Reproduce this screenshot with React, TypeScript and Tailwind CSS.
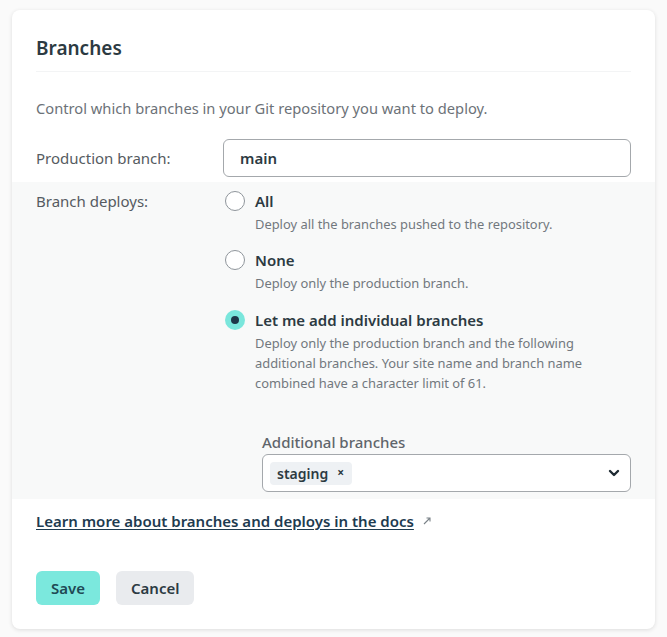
import React from "react";

const Radio = ({
  checked,
  title,
  children,
}: {
  checked?: boolean;
  title: string;
  children: React.ReactNode;
}) => {
  return (
    <div className="flex flex-row">
      <div className="w-[32px] shrink-0 pt-0">
        {checked ? (
          <div className="w-5 h-5 ml-[2px] rounded-full bg-[#7ae6dc] flex items-center justify-center">
            <div className="w-[8px] h-[8px] rounded-full bg-[#1e3648]" />
          </div>
        ) : (
          <div className="w-5 h-5 ml-[2px] rounded-full border border-[#8f959b] bg-white" />
        )}
      </div>
      <div className="flex flex-col">
        <p className="text-[15px] leading-5 font-semibold text-[#2c3a42]">{title}</p>
        <p className="mt-[3px] text-[12.9px] leading-5 text-[#72787e]">{children}</p>
      </div>
    </div>
  );
};

export default function App() {
  return (
    <div
      className="min-h-[637px] w-[667px] bg-[#fafafa] pt-[10px] px-[12px]"
      style={{ fontFamily: '"Noto Sans", "Open Sans", sans-serif' }}
    >
      <div className="w-[643px] bg-white rounded-lg shadow-[0_1px_4px_rgba(0,0,0,0.12)] pb-6">
        <div className="px-6">
          <div className="h-[62px] pt-[26px] border-b border-[#f3f4f5]">
            <h2 className="text-[19px] leading-6 font-semibold text-[#2c3a42]">Branches</h2>
          </div>
        </div>

        <p className="px-6 mt-[26px] text-[14.7px] leading-5 text-[#6c7278]">
          Control which branches in your Git repository you want to deploy.
        </p>

        <div className="px-6 mt-[21px] flex flex-row items-center">
          <label className="w-[187px] text-[15px] leading-5 text-[#555b61]">Production branch:</label>
          <div className="flex-1 h-[38px] rounded-md border border-[#a4a8ac] bg-white flex items-center px-4">
            <span className="text-[15px] font-semibold text-[#2c3a42]">main</span>
          </div>
        </div>

        <div className="mt-[5px] bg-[#f8f9f9] px-6 pt-[9px] pb-[7px] flex flex-row">
          <label className="w-[187px] shrink-0 text-[15px] leading-5 text-[#555b61]">Branch deploys:</label>
          <div className="flex-1 flex flex-col">
            <Radio title="All">Deploy all the branches pushed to the repository.</Radio>
            <div className="h-[16px]" />
            <Radio title="None">Deploy only the production branch.</Radio>
            <div className="h-[17px]" />
            <Radio checked title="Let me add individual branches">
              Deploy only the production branch and the following
              <br />
              additional branches. Your site name and branch name
              <br />
              combined have a character limit of 61.
            </Radio>
            <div className="ml-[39px] mt-[39px]">
              <p className="text-[15px] leading-5 font-medium text-[#5f656b]">Additional branches</p>
              <div className="mt-[2px] h-[38px] rounded-md border border-[#a4a8ac] bg-white flex flex-row items-center pl-[7px] pr-[10px]">
                <div className="h-[23px] bg-[#eef1f4] rounded-sm flex items-center pl-[7px] pr-[8px] gap-[9px]">
                  <span className="text-[14px] font-semibold text-[#2c3a42]">staging</span>
                  <span className="text-[12px] font-bold text-[#2c3a42]">×</span>
                </div>
                <div className="flex-1" />
                <svg width="12" height="12" viewBox="0 0 12 12">
                  <path d="M2 4 L6 8 L10 4" fill="none" stroke="#1e2a32" strokeWidth="2.4" strokeLinecap="round" strokeLinejoin="round" />
                </svg>
              </div>
            </div>
          </div>
        </div>

        <div className="px-6 mt-[12px] flex flex-row items-center gap-[8px]">
          <a className="text-[15px] leading-5 font-semibold text-[#1e3b50] underline underline-offset-2">
            Learn more about branches and deploys in the docs
          </a>
          <svg width="10" height="10" viewBox="0 0 10 10">
            <path d="M2 8 L8 2 M4.5 2 H8 V5.5" fill="none" stroke="#7a8288" strokeWidth="1.1" />
          </svg>
        </div>

        <div className="px-6 mt-[40px] flex flex-row gap-[16px]">
          <button className="h-[34px] px-[15px] rounded-md bg-[#7be8dd] text-[15px] font-semibold text-[#1f4a55]">
            Save
          </button>
          <button className="h-[34px] px-[15px] rounded-md bg-[#e9ebee] text-[15px] font-semibold text-[#2c3a42]">
            Cancel
          </button>
        </div>
      </div>
    </div>
  );
}
